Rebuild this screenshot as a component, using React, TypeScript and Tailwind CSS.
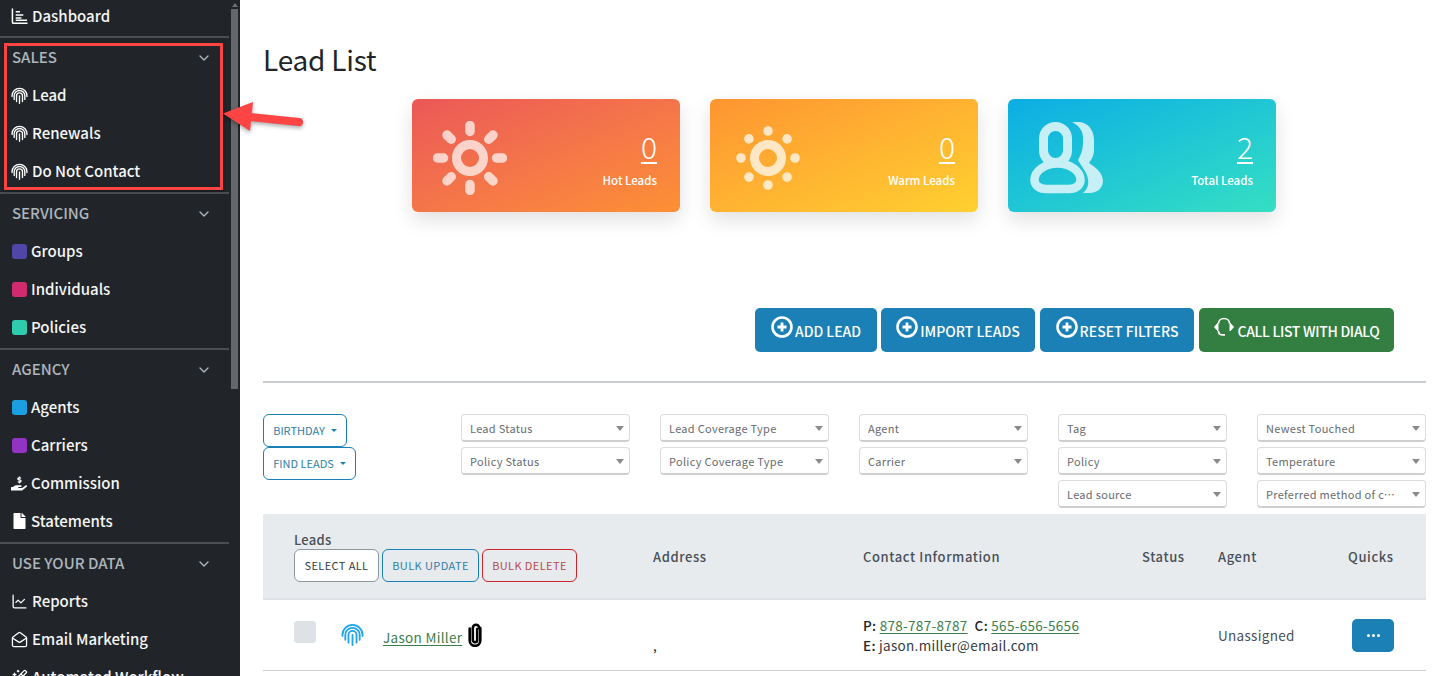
import React from 'react';
import { ChartLine, MailOpen, WandSparkles, ChevronDown } from 'lucide-react';
import { FaFile, FaHandHoldingUsd } from 'react-icons/fa';

const Fingerprint = ({ className }: { className?: string }) => (
  <svg viewBox="0 0 24 24" fill="none" stroke="currentColor" strokeWidth="1.9" strokeLinecap="round" className={className}>
    <path d="M1.5 13.5v-1a10.5 10.5 0 0 1 21 0v1" />
    <path d="M4.5 17.5V12.5a7.5 7.5 0 0 1 15 0v5" />
    <path d="M7.8 20.5V12.5a4.2 4.2 0 0 1 8.4 0v8" />
    <path d="M12 23V12.5" />
  </svg>
);

const DashIcon = () => (
  <svg viewBox="0 0 18 18" fill="none" stroke="white" strokeWidth="1.6" className="h-[18px] w-[17px] shrink-0">
    <path d="M1.5 1v14.500a1.200 1.200 0 0 0 1.200 1.200H17.500" />
    <path d="M5 4.500h4.500M5 8h8M5 11h6M5 13.600h12" />
  </svg>
);

const PlusCircle = () => (
  <svg viewBox="0 0 22 22" fill="none" stroke="white" className="h-[22px] w-[22px] shrink-0 -translate-y-[3px]">
    <circle cx="11" cy="11" r="9.500" strokeWidth="2.600" />
    <path d="M11 6.500v9M6.500 11h9" strokeWidth="2.800" />
  </svg>
);

const Headset = () => (
  <svg viewBox="0 0 22 22" fill="none" stroke="white" strokeWidth="1.700" className="h-[22px] w-[22px] shrink-0 -translate-y-[3px]">
    <path d="M5.500 7.500C5.500 4.500 8 2.500 11 2.500s5.500 2 5.500 5" />
    <path d="M5 7 1.500 11 5 15zM17 7l3.500 4-3.500 4z" fill="white" strokeLinejoin="round" strokeWidth="1" />
    <path d="M5.500 15c0 2.500 1.500 3.800 3.500 3.800h3" />
  </svg>
);

const Clip = () => (
  <svg viewBox="0 0 14 24" fill="none" stroke="black" strokeWidth="2.600" strokeLinecap="round" className="h-[24px] w-[16px]">
    <path d="M9.200 6v11a2.200 2.200 0 0 1-4.400 0V5a3.200 3.200 0 0 1 6.400 0" strokeLinejoin="round" />
    <path d="M12.300 5v12.500a5.300 5.300 0 0 1-10.600 0V5.500" />
  </svg>
);

const HotSun = () => (
  <svg viewBox="0 0 74 74" className="h-[74px] w-[74px]">
    <circle cx="37" cy="37" r="13.500" fill="none" stroke="white" strokeOpacity="0.7" strokeWidth="9" />
    {[0, 45, 90, 135, 180, 225, 270, 315].map(a => (
      <line key={a} x1="37" y1="4.500" x2="37" y2="10.500" stroke="white" strokeOpacity="0.7" strokeWidth="9.500" strokeLinecap="round" transform={`rotate(${a} 37 37)`} />
    ))}
  </svg>
);

const WarmSun = () => (
  <svg viewBox="0 0 66 66" className="h-[66px] w-[66px]">
    <circle cx="33" cy="33" r="13.500" fill="none" stroke="white" strokeOpacity="0.72" strokeWidth="9" />
    {[0, 45, 90, 135, 180, 225, 270, 315].map(a => (
      <circle key={a} cx="33" cy="6" r="4.800" fill="white" fillOpacity="0.72" transform={`rotate(${a} 33 33)`} />
    ))}
  </svg>
);

const People = () => (
  <svg viewBox="0 0 74 72" fill="none" className="h-[72px] w-[74px]">
    <rect x="13.500" y="4.500" width="24" height="36" rx="12" stroke="#c6eff6" strokeWidth="9" />
    <path d="M16 67H39C46 67 50.500 63 50.500 58C50.500 49 40 41.500 27.500 41.500C15 41.500 4.500 49 4.500 58C4.500 63 9 67 16 67Z" stroke="#c6eff6" strokeWidth="8.500" fill="none" />
    <path d="M42 0H48C58 0 64 8 64 18V28C64 34 61 38 59 41C67 46 73 52 73 59C73 66 67 71 60 71H53C57 68 59 63 58 57C57 50 51 44 48 38C51 33 53 27 53 21V16C53 8 48 3 42 0Z" fill="#c6eff6" />
  </svg>
);

type NavItem = { label: string; icon: React.ReactNode };

const swatch = (color: string) => <span className={`ml-[1px] h-[15px] w-[15px] shrink-0 rounded-[3px] ${color}`} />;
const fp = <Fingerprint className="h-[17px] w-[17px] shrink-0 text-white" />;

const sections: { title: string; items: NavItem[] }[] = [
  {
    title: 'SALES',
    items: [
      { label: 'Lead', icon: fp },
      { label: 'Renewals', icon: fp },
      { label: 'Do Not Contact', icon: fp },
    ],
  },
  {
    title: 'SERVICING',
    items: [
      { label: 'Groups', icon: swatch('bg-[#4f46a8]') },
      { label: 'Individuals', icon: swatch('bg-[#d12a6e]') },
      { label: 'Policies', icon: swatch('bg-[#2fcbaf]') },
    ],
  },
  {
    title: 'AGENCY',
    items: [
      { label: 'Agents', icon: swatch('bg-[#1b9fe0]') },
      { label: 'Carriers', icon: swatch('bg-[#9233c4]') },
      { label: 'Commission', icon: <FaHandHoldingUsd className="h-[17px] w-[16px] shrink-0 text-white" /> },
      { label: 'Statements', icon: <span className="flex w-[16px] shrink-0 justify-center"><FaFile className="h-[16px] w-[13px] text-white" /></span> },
    ],
  },
  {
    title: 'USE YOUR DATA',
    items: [
      { label: 'Reports', icon: <ChartLine className="h-[17px] w-[17px] shrink-0 text-white" strokeWidth={1.8} /> },
      { label: 'Email Marketing', icon: <MailOpen className="h-[17px] w-[17px] shrink-0 text-white" strokeWidth={1.8} /> },
      { label: 'Automated Workflow', icon: <WandSparkles className="h-[17px] w-[17px] shrink-0 text-white" strokeWidth={1.8} /> },
    ],
  },
];

function Row({ item }: { item: NavItem }) {
  return (
    <div className="flex h-[38px] items-center gap-[4px] pb-[4px] pl-[11px] text-[15px] leading-[22px] font-medium text-[#f4f5f6]">
      {item.icon}
      <span className="whitespace-nowrap">{item.label}</span>
    </div>
  );
}

function Sidebar() {
  return (
    <aside className="flex h-[676px] w-[240px] shrink-0 overflow-hidden bg-[#212529]">
      <nav className="w-[229px] shrink-0">
        <div className="h-[36px]">
          <div className="flex h-[32px] items-center gap-[4px] pl-[11px] text-[15px] font-medium text-[#f4f5f6]">
            <DashIcon />
            <span>Dashboard</span>
          </div>
        </div>
        {sections.map(s => (
          <section key={s.title} className="border-t-2 border-[#4b4e52]">
            <div className="flex h-[40px] items-center justify-between pr-[17px] pb-[1px] pl-[12px] text-[15px] font-medium text-[#adb5bd]">
              <span>{s.title}</span>
              <ChevronDown className="h-[16px] w-[16px] text-[#adb5bd]" strokeWidth={2} />
            </div>
            {s.items.map(i => <Row key={i.label} item={i} />)}
          </section>
        ))}
      </nav>
      <div className="ml-[2px] flex w-[7px] flex-col items-center">
        <span className="mt-[3px] mb-[2px] h-0 w-0 border-x-[3px] border-b-[4px] border-x-transparent border-b-[#6b6e72]" />
        <div className="h-[380px] w-full bg-[#65686b]" />
      </div>
    </aside>
  );
}

function StatCard({ gradient, icon, value, label }: { gradient: string; icon: React.ReactNode; value: string; label: string }) {
  return (
    <div className={`flex h-[113px] w-[268px] items-center justify-between rounded-[6px] pr-[23px] pl-[22px] text-white shadow-[0_8px_20px_rgba(0,0,0,0.12)] ${gradient}`}>
      <div className="pt-[4px]">{icon}</div>
      <div className="pt-[6px] text-right">
        <div className="text-[30px] leading-[34px] font-light underline decoration-2 underline-offset-[3px]">{value}</div>
        <div className="mt-[9px] text-[11.5px] leading-[16px] font-medium">{label}</div>
      </div>
    </div>
  );
}

function ActionButton({ className, icon, children }: { className: string; icon: React.ReactNode; children: React.ReactNode }) {
  return (
    <button className={`flex h-[44px] items-center justify-center gap-[2px] rounded-[5px] text-[14px] leading-[20px] font-medium whitespace-nowrap text-white ${className}`}>
      {icon}
      <span className="pt-[2px]">{children}</span>
    </button>
  );
}

function Filter({ label }: { label: string }) {
  return (
    <div className="flex h-[28px] w-[169px] items-center justify-between rounded-[4px] border border-[#dcdcdc] border-b-2 border-b-[#cfcfcf] pt-[1px] pr-[5px] pl-[8px] text-[11px] tracking-[0.3px] text-[#666b70]">
      <span className="max-w-[131px] truncate">{label}</span>
      <span className="ml-[3px] h-0 w-0 shrink-0 border-x-[4.5px] border-t-[5px] border-x-transparent border-t-[#8a8a8a]" />
    </div>
  );
}

const filterColumns = [
  ['Lead Status', 'Policy Status'],
  ['Lead Coverage Type', 'Policy Coverage Type'],
  ['Agent', 'Carrier'],
  ['Tag', 'Policy', 'Lead source'],
  ['Newest Touched', 'Temperature', 'Preferred method of contact'],
];

function Dropdown({ label, width }: { label: string; width: string }) {
  return (
    <button className={`flex h-[33px] items-center justify-center gap-[6px] rounded-[6px] border border-[#1a80b6] text-[11px] text-[#2d7ea8] ${width}`}>
      {label}
      <span className="h-0 w-0 border-x-[3px] border-t-[3px] border-x-transparent border-t-[#1a80b6]" />
    </button>
  );
}

const headCell = 'pt-[1px] text-[13px] leading-[20px] font-medium tracking-[0.6px] text-[#495057]';

export default function App() {
  return (
    <div className="relative flex h-[676px] w-[1447px] overflow-hidden bg-white text-[#212529] font-['Noto_Sans_CJK_SC','Noto_Sans',sans-serif]">
      <Sidebar />
      <main className="ml-[23px] w-[1163px] shrink-0">
        <h1 className="h-[99px] pt-[37px] text-[28px] leading-[44px] font-normal tracking-[-0.2px] text-[#212529]">Lead List</h1>

        <div className="ml-[149px] flex gap-[30px]">
          <StatCard gradient="bg-gradient-to-br from-[#eb5757] to-[#fd9032]" icon={<span className="-ml-[1px] block"><HotSun /></span>} value="0" label="Hot Leads" />
          <StatCard gradient="bg-gradient-to-br from-[#fd9431] to-[#ffd030]" icon={<span className="ml-[3px] block"><WarmSun /></span>} value="0" label="Warm Leads" />
          <StatCard gradient="bg-gradient-to-br from-[#0dade3] to-[#35dfc2]" icon={<People />} value="2" label="Total Leads" />
        </div>

        <div className="mt-[96px] flex justify-end gap-[5px] pr-[32px]">
          <ActionButton className="w-[122px] bg-[#1a80b6]" icon={<PlusCircle />}>ADD LEAD</ActionButton>
          <ActionButton className="-ml-[1px] w-[154px] bg-[#1a80b6]" icon={<PlusCircle />}>IMPORT LEADS</ActionButton>
          <ActionButton className="w-[154px] bg-[#1a80b6]" icon={<PlusCircle />}>RESET FILTERS</ActionButton>
          <ActionButton className="w-[195px] bg-[#337f42] tracking-[-0.3px]" icon={<Headset />}>CALL LIST WITH DIALQ</ActionButton>
        </div>

        <hr className="mt-[29px] border-t-2 border-[#c9cdd1]" />

        <div className="mt-[31px] flex h-[100px]">
          <div className="flex w-[198px] shrink-0 flex-col items-start">
            <Dropdown label="BIRTHDAY" width="w-[84px]" />
            <Dropdown label="FIND LEADS" width="w-[93px]" />
          </div>
          <div className="flex gap-[30px]">
            {filterColumns.map((col, i) => (
              <div key={i} className="flex flex-col gap-[5px]">
                {col.map(f => <Filter key={f} label={f} />)}
              </div>
            ))}
          </div>
        </div>

        <div className="grid h-[86px] grid-cols-[390px_210px_279px_76px_130px_78px] items-center border-b-2 border-[#dee2e6] bg-[#e8ebee]">
          <div className="pl-[31px]">
            <div className="text-[13px] leading-[18px] font-medium tracking-[0.3px] text-[#495057]">Leads</div>
            <div className="flex gap-[3px]">
              <button className="h-[33px] w-[85px] rounded-[6px] border border-[#8f979e] bg-white text-[11px] tracking-[0.4px] text-[#343a40]">SELECT ALL</button>
              <button className="h-[33px] w-[97px] rounded-[6px] border border-[#1a80b6] text-[11px] tracking-[0.4px] text-[#2d7ea8]">BULK UPDATE</button>
              <button className="h-[33px] w-[95px] rounded-[6px] border border-[#c9252c] text-[11px] tracking-[0.4px] text-[#b8474c]">BULK DELETE</button>
            </div>
          </div>
          <div className={headCell}>Address</div>
          <div className={headCell}>Contact Information</div>
          <div className={headCell}>Status</div>
          <div className={headCell}>Agent</div>
          <div className={headCell}>Quicks</div>
        </div>

        <div className="grid h-[71px] grid-cols-[390px_210px_279px_76px_130px_78px] items-center border-b border-[#cdd0d4] text-[13.5px] tracking-[0.3px]">
          <div className="flex items-center pl-[31px]">
            <span className="-mt-[6px] h-[22px] w-[22px] rounded-[3px] bg-[#dee2e6]" />
            <Fingerprint className="-mt-[2px] ml-[25px] h-[23px] w-[23px] text-[#1fa5ea]" />
            <a className="ml-[19px] pt-[4px] text-[#3b7d4c] underline underline-offset-2">Jason Miller</a>
            <span className="ml-[5px]"><Clip /></span>
          </div>
          <div className="pt-[20px] text-[#212529]">,</div>
          <div className="leading-[20px] text-[#343a40]">
            <div>
              <span className="font-medium text-[#212529]">P:</span> <a className="text-[#3b7d4c] underline underline-offset-2">878-787-8787</a>
              <span className="ml-[7px] font-medium text-[#212529]">C:</span> <a className="text-[#3b7d4c] underline underline-offset-2">565-656-5656</a>
            </div>
            <div><span className="font-medium text-[#212529]">E:</span> jason.miller@email.com</div>
          </div>
          <div />
          <div className="text-[#495057]">Unassigned</div>
          <button className="ml-[4px] flex h-[33px] w-[42px] items-center justify-center gap-[2px] rounded-[5px] bg-[#1a80b6]">
            <span className="h-[3px] w-[3px] rounded-full bg-white" />
            <span className="h-[3px] w-[3px] rounded-full bg-white" />
            <span className="h-[3px] w-[3px] rounded-full bg-white" />
          </button>
        </div>
      </main>

      {/* annotation over the sidebar */}
      <div className="absolute top-[43px] left-[4px] h-[147px] w-[219px] border-[3px] border-[#ff4444] shadow-[0_1px_3px_rgba(0,0,0,0.4)]" />
      <svg viewBox="0 0 90 44" className="absolute top-[98px] left-[220px] h-[44px] w-[90px] drop-shadow-[0_2px_2px_rgba(0,0,0,0.35)]">
        <path d="M3 15.500 33 4 30 33z" fill="#ff4444" />
        <path d="M30 19 79 24" stroke="#ff4444" strokeWidth="8" strokeLinecap="round" />
      </svg>
    </div>
  );
}
